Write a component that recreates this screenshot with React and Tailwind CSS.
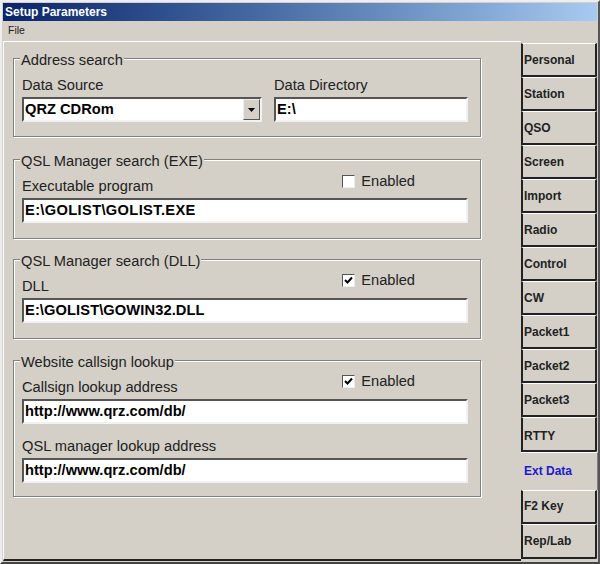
const Inp = ({ children, className = "" }) => (
  <div className={"h-[25px] bg-white border-2 border-t-[#555] border-l-[#555] border-r-[#f2f2f2] border-b-[#f2f2f2] pl-[1px] flex items-center text-[14.67px] font-bold text-black leading-none " + className}>
    {children}
  </div>
);

const Group = ({ title, className = "", children }) => (
  <div className={"relative border border-[#808080] shadow-[1px_1px_0_#fff,inset_1px_1px_0_#fff] " + className}>
    <div className="absolute left-[6px] top-[-7px] bg-[#d4d0c8] px-[1px] text-[14.67px] leading-[17px] text-[#222]">{title}</div>
    {children}
  </div>
);

const Check = ({ checked }) => (
  <div className="flex items-center gap-[6px] text-[14.67px] leading-[17px] text-[#222]">
    <div className="w-[13px] h-[13px] bg-white border border-t-[#555] border-l-[#555] border-r-[#eee] border-b-[#eee] flex items-center justify-center">
      {checked && (
        <svg width="9" height="9" viewBox="0 0 9 9"><path d="M1 4 L3.5 6.5 L8 1.5" fill="none" stroke="#000" strokeWidth="2" /></svg>
      )}
    </div>
    <span>Enabled</span>
  </div>
);

const tabs = [
  ["Personal", "h-[34px]"], ["Station", "h-[34px]"], ["QSO", "h-[34px]"], ["Screen", "h-[34px]"], ["Import", "h-[34px]"], ["Radio", "h-[34px]"], ["Control", "h-[34px]"], ["CW", "h-[34px]"],
  ["Packet1", "h-[34px]"], ["Packet2", "h-[34px]"], ["Packet3", "h-[34px]"], ["RTTY", "h-[35px] pt-[3px]"], ["Ext Data", "h-[38px]", true], ["F2 Key", "h-[34px] pb-[2px]"], ["Rep/Lab", "h-[35px] pb-[1px]"],
];

const Tab = ({ name, cls, active }) =>
  active ? (
    <div className={"w-[77px] border-t border-t-white border-r border-r-[#808080] pl-[3px] pb-[2px] flex items-center text-[12px] font-bold text-[#1a1ad0] bg-[#d4d0c8] " + cls}>
      {name}
    </div>
  ) : (
    <div className={"w-[76px] border-t border-t-white border-l-2 border-l-[#222] border-r-2 border-r-[#222] border-b-2 border-b-[#222] rounded-br-[2px] pl-[1px] flex items-center text-[12px] font-bold text-[#222] " + cls}>
      {name}
    </div>
  );

export default function App() {
  return (
    <div className="w-[600px] h-[564px] bg-[#d4d0c8] border-2 border-t-[#eee] border-l-[#eee] border-r-[#555] border-b-[#444] p-[1px] flex flex-col overflow-hidden" style={{ fontFamily: '"Liberation Sans", Arial, sans-serif' }}>
      <div className="h-[18px] w-[594px] shrink-0 bg-gradient-to-r from-[#0a246a] to-[#a6caf0] pl-[2px] text-[12px] font-bold text-white flex items-center">
        Setup Parameters
      </div>
      <div className="h-[20px] shrink-0 pl-[5px] text-[10.5px] text-[#222] flex items-center">File</div>
      <div className="flex flex-1 min-h-0">
        <div className="w-[518px] shrink-0 border-t border-t-white border-l border-l-white border-b-2 border-b-[#222] pl-[9px] pt-[16px] pb-[1px]">
          <Group title="Address search" className="w-[468px] h-[79px] px-[8px] pt-[18px]">
            <div className="flex gap-[12px]">
              <div className="w-[240px]">
                <div className="text-[14.67px] leading-[17px] mb-[3px] text-[#222]">Data Source</div>
                <Inp className="justify-between pl-[1px] pr-0">
                  <span>QRZ CDRom</span>
                  <div className="w-[17px] h-[21px] bg-[#d4d0c8] border border-t-[#eee] border-l-[#eee] border-r-[#555] border-b-[#555] flex items-center justify-center">
                    <svg width="7" height="4" viewBox="0 0 7 4"><path d="M0 0 H7 L3.5 4 Z" fill="#000" /></svg>
                  </div>
                </Inp>
              </div>
              <div className="w-[194px]">
                <div className="text-[14.67px] leading-[17px] mb-[3px] text-[#222]">Data Directory</div>
                <Inp>E:\</Inp>
              </div>
            </div>
          </Group>

          <Group title="QSL Manager search (EXE)" className="w-[468px] h-[80px] mt-[22px] px-[8px] pt-[18px]">
            <div className="flex justify-between pr-[57px] items-start">
              <div className="text-[14.67px] leading-[17px] text-[#222]">Executable program</div>
              <div className="mt-[-5px]"><Check /></div>
            </div>
            <Inp className="w-[446px] mt-[3px] tracking-[0.35px]">E:\GOLIST\GOLIST.EXE</Inp>
          </Group>

          <Group title="QSL Manager search (DLL)" className="w-[468px] h-[80px] mt-[20px] px-[8px] pt-[18px]">
            <div className="flex justify-between pr-[57px] items-start">
              <div className="text-[14.67px] leading-[17px] text-[#222]">DLL</div>
              <div className="mt-[-6px]"><Check checked /></div>
            </div>
            <Inp className="w-[446px] mt-[3px] tracking-[0.1px]">E:\GOLIST\GOWIN32.DLL</Inp>
          </Group>

          <Group title="Website callsign lookup" className="w-[468px] h-[137px] mt-[21px] px-[8px] pt-[18px]">
            <div className="flex justify-between pr-[57px] items-start">
              <div className="text-[14.67px] leading-[17px] text-[#222]">Callsign lookup address</div>
              <div className="mt-[-6px]"><Check checked /></div>
            </div>
            <Inp className="w-[446px] mt-[3px]">http://www.qrz.com/db/</Inp>
            <div className="text-[14.67px] leading-[17px] mt-[14px] text-[#222]">QSL manager lookup address</div>
            <Inp className="w-[446px] mt-[3px]">http://www.qrz.com/db/</Inp>
          </Group>
        </div>
        <div className="flex flex-col pt-[2px]">
          {tabs.map(([n, c, a]) => <Tab key={n} name={n} cls={c} active={a} />)}
        </div>
      </div>
    </div>
  );
}
